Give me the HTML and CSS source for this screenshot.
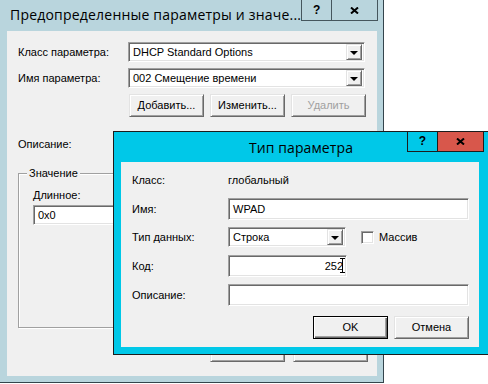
FILE: index.html
```html
<!DOCTYPE html>
<html lang="ru">
<head>
  <meta charset="UTF-8" />
  <title>Тип параметра</title>
  <link rel="stylesheet" href="styles.css">
</head>
<body>
  <div class="desk">

    <section class="win win-back">
      <header class="caption">
        <span class="caption-title">Предопределенные параметры и значе...</span>
        <div class="caption-btns">
          <span class="cbtn cbtn-help">?</span>
          <span class="cbtn cbtn-close">
            <svg width="9" height="7" viewBox="0 0 9 7"><path d="M1 0.5 L8 6.5 M8 0.5 L1 6.5" stroke="#000" stroke-width="2"/></svg>
          </span>
        </div>
      </header>

      <div class="client">
        <div class="row row-20">
          <span class="lbl lbl-back">Класс параметра:</span>
          <div class="combo combo-wide">DHCP Standard Options<span class="drop"></span></div>
        </div>
        <div class="row row-20 gap-6">
          <span class="lbl lbl-back">Имя параметра:</span>
          <div class="combo combo-wide">002 Смещение времени<span class="drop"></span></div>
        </div>
        <div class="btn-row btn-row-top">
          <button class="btn">Добавить...</button>
          <button class="btn">Изменить...</button>
          <button class="btn" disabled>Удалить</button>
        </div>
        <div class="row row-20 desc-row">
          <span class="lbl lbl-back">Описание:</span>
        </div>
        <div class="group">
          <span class="group-cap">Значение</span>
          <span class="group-lbl">Длинное:</span>
          <div class="field field-long">0x0</div>
        </div>
        <div class="btn-row btn-row-bottom">
          <button class="btn">OK</button>
          <button class="btn">Отмена</button>
        </div>
      </div>
    </section>

    <section class="win win-front">
      <header class="caption">
        <span class="caption-title">Тип параметра</span>
        <div class="caption-btns">
          <span class="cbtn cbtn-help">?</span>
          <span class="cbtn cbtn-close">
            <svg width="9" height="7" viewBox="0 0 9 7"><path d="M1 0.5 L8 6.5 M8 0.5 L1 6.5" stroke="#000" stroke-width="2"/></svg>
          </span>
        </div>
      </header>

      <div class="client">
        <div class="row row-20">
          <span class="lbl lbl-front">Класс:</span>
          <span>глобальный</span>
        </div>
        <div class="row row-22 gap-8">
          <span class="lbl lbl-front">Имя:</span>
          <div class="field field-full">WPAD</div>
        </div>
        <div class="row row-20 gap-7">
          <span class="lbl lbl-front">Тип данных:</span>
          <div class="combo combo-short">Строка<span class="drop"></span></div>
          <span class="check"></span>
          <span>Массив</span>
        </div>
        <div class="row row-22 gap-8">
          <span class="lbl lbl-front">Код:</span>
          <div class="field field-code">252<span class="ibeam"></span></div>
        </div>
        <div class="row row-22 gap-7">
          <span class="lbl lbl-front">Описание:</span>
          <div class="field field-full"></div>
        </div>
        <div class="btn-row btn-row-dialog">
          <button class="btn btn-default">OK</button>
          <button class="btn">Отмена</button>
        </div>
      </div>
    </section>

  </div>
</body>
</html>
```

FILE: styles.css
```css
* {
  box-sizing: border-box;
}

body {
  margin: 0;
  background: #fff;
  font-family: "Liberation Sans", Arial, sans-serif;
  font-size: 11px;
  line-height: 13px;
  color: #000;
}

.desk {
  position: relative;
  width: 488px;
  height: 384px;
  overflow: hidden;
}

/* windows */
.win {
  position: absolute;
  display: flex;
  flex-direction: column;
}

.win-back {
  left: -1px;
  top: -1px;
  width: 385px;
  height: 384px;
  padding: 0 6px 6px 7px;
  background: #b9d5dd;
  border: 1px solid #34454c;
}

.win-front {
  left: 113px;
  top: 131px;
  width: 376px;
  height: 224px;
  padding: 0 9px 7px 7px;
  background: #00c8e8;
  border: 1px solid #1c1c1c;
}

.caption {
  display: flex;
  align-items: flex-start;
  flex: none;
}

.win-back .caption {
  height: 31px;
}

.win-front .caption {
  height: 30px;
}

.caption-title {
  font-family: "Open Sans", "Noto Sans", sans-serif;
  font-size: 14px;
  line-height: 20px;
  white-space: nowrap;
  color: #000;
}

.win-back .caption-title {
  flex: none;
  padding: 5px 0 0 3px;
  letter-spacing: 0.2px;
}

.win-front .caption-title {
  position: absolute;
  left: 0;
  right: 0;
  top: 6px;
  text-align: center;
  letter-spacing: 0.1px;
}

.caption-btns {
  display: flex;
  margin-left: auto;
  position: relative;
}

.win-front .caption-btns {
  margin-right: -5px;
}

.cbtn {
  display: flex;
  align-items: center;
  justify-content: center;
  height: 21px;
  border: 1px solid #45565d;
  border-top: none;
  font-weight: bold;
  font-size: 12px;
}

.cbtn-help {
  width: 30px;
  border-right: none;
}

.cbtn-close {
  width: 47px;
}

.win-front .cbtn {
  height: 20px;
  border-color: #1c1c1c;
}

.win-front .cbtn-close {
  background: #d8574b;
}

.client {
  flex: 1;
  display: flex;
  flex-direction: column;
  background: #f0f0f0;
}

.win-back .client {
  padding: 11px 0 0 11px;
}

.win-front .client {
  padding: 8px 0 0 11px;
}

/* rows */
.row {
  display: flex;
  align-items: center;
}

.row-20 {
  height: 20px;
}

.row-22 {
  height: 22px;
}

.gap-6 { margin-top: 6px; }
.gap-7 { margin-top: 7px; }
.gap-8 { margin-top: 8px; }

.lbl {
  flex: none;
}

.lbl-back {
  width: 110px;
}

.lbl-front {
  width: 96px;
}

.desc-row {
  margin-top: 17px;
}

/* sunken fields */
.combo,
.field,
.check {
  background: #fff;
  border: 1px solid;
  border-color: #a0a0a0 #fff #fff #a0a0a0;
  box-shadow: inset 1px 1px #696969, inset -1px -1px #e3e3e3;
}

.combo,
.field {
  display: flex;
  align-items: center;
  padding-left: 4px;
  white-space: nowrap;
}

.combo {
  height: 20px;
  padding-right: 2px;
}

.combo-wide {
  width: 237px;
}

.combo-short {
  width: 118px;
  margin-right: 15px;
}

.drop {
  margin-left: auto;
  width: 16px;
  height: 16px;
  background: #f0f0f0;
  border: 1px solid;
  border-color: #e3e3e3 #696969 #696969 #e3e3e3;
  box-shadow: inset 1px 1px #fff, inset -1px -1px #a0a0a0;
  display: flex;
  align-items: center;
  justify-content: center;
}

.drop::after {
  content: "";
  border-left: 4px solid transparent;
  border-right: 4px solid transparent;
  border-top: 4px solid #000;
  margin-top: 1px;
}

.field {
  height: 22px;
}

.field-full {
  width: 241px;
}

.field-code {
  position: relative;
  width: 119px;
  justify-content: flex-end;
  padding-right: 3px;
}

.field-long {
  width: 320px;
  height: 20px;
}

.check {
  width: 13px;
  height: 13px;
  margin-right: 5px;
}

.ibeam {
  position: absolute;
  right: 1px;
  top: 2px;
  width: 5px;
  height: 15px;
  border-top: 1px solid #000;
  border-bottom: 1px solid #000;
  background: linear-gradient(#000, #000) center / 1px 100% no-repeat;
}

/* buttons */
.btn-row {
  display: flex;
  gap: 6px;
}

.btn-row-top {
  margin-top: 6px;
  padding-left: 111px;
}

.btn-row-bottom {
  margin-top: 11px;
  padding-left: 192px;
  gap: 8px;
}

.btn-row-dialog {
  margin-top: 10px;
  padding-left: 181px;
}

.btn {
  width: 75px;
  height: 23px;
  padding: 0;
  font: inherit;
  color: #000;
  background: #f0f0f0;
  border: 1px solid;
  border-color: #e3e3e3 #696969 #696969 #e3e3e3;
  box-shadow: inset 1px 1px #fff, inset -1px -1px #a0a0a0;
}

.btn:disabled {
  color: #a0a0a0;
}

.btn-default {
  border-color: #000;
  box-shadow: inset 1px 1px #fff, inset -1px -1px #696969, inset -2px -2px #a0a0a0;
}

/* group box */
.group {
  display: flex;
  flex-direction: column;
  align-items: flex-start;
  margin-top: 19px;
  width: 348px;
  height: 155px;
  padding-left: 14px;
  border: 1px solid #a0a0a0;
  box-shadow: inset 1px 1px #fff, 1px 1px #fff;
}

.group-cap {
  margin: -7px 0 0 -6px;
  padding: 0 2px;
  background: #f0f0f0;
}

.group-lbl {
  margin-top: 9px;
}

.group .field-long {
  margin-top: 3px;
}
```
